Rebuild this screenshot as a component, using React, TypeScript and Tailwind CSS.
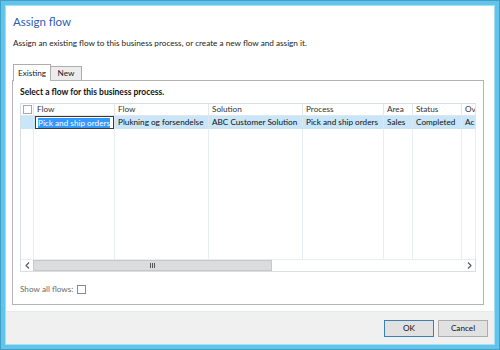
const cols = [
  { w: 13, label: '', cell: '' },
  { w: 81, label: 'Flow', cell: 'Pick and ship orders' },
  { w: 94, label: 'Flow', cell: 'Plukning og forsendelse' },
  { w: 94, label: 'Solution', cell: 'ABC Customer Solution' },
  { w: 81, label: 'Process', cell: 'Pick and ship orders' },
  { w: 29, label: 'Area', cell: 'Sales' },
  { w: 49, label: 'Status', cell: 'Completed' },
  { w: 14, label: 'Ov', cell: 'Ac' },
];

function Chevron({ dir }: { dir: 'left' | 'right' }) {
  return (
    <svg width="5" height="7" viewBox="0 0 5 7">
      <polyline
        points={dir === 'left' ? '4,0.5 1,3.5 4,6.5' : '1,0.5 4,3.5 1,6.5'}
        fill="none"
        stroke="#555"
        strokeWidth="1.1"
      />
    </svg>
  );
}

function Grid() {
  return (
    <div className="mt-[4px] flex h-[169px] w-[456px] flex-col border border-[#d5dfe7] bg-white">
      {/* header */}
      <div className="flex h-[12px] border-b border-[#e1e7ec]">
        {cols.map((c, i) => (
          <div
            key={i}
            style={{ width: c.w }}
            className="flex shrink-0 items-center overflow-hidden whitespace-nowrap border-r border-[#e1e7ec] pl-[3px] text-[#333]"
          >
            {i === 0 ? <div className="ml-[-1px] h-[9px] w-[9px] border border-[#a9a9a9] bg-white" /> : c.label}
          </div>
        ))}
      </div>
      {/* selected row */}
      <div className="flex h-[13px] bg-[#c9e6f8]">
        {cols.map((c, i) => (
          <div
            key={i}
            style={{ width: c.w }}
            className="flex shrink-0 items-center overflow-hidden whitespace-nowrap border-r border-[#dbe8f1] pl-[3px] text-[#111]"
          >
            {i === 1 ? (
              <div className="ml-[-2px] flex h-[13px] w-[79px] items-center border border-[#3a3a3a] bg-white pl-[2px]">
                <span className="bg-[#3399ff] leading-[10px] text-white">{c.cell}</span>
              </div>
            ) : (
              c.cell
            )}
          </div>
        ))}
      </div>
      {/* empty area */}
      <div className="flex flex-1">
        {cols.map((c, i) => (
          <div key={i} style={{ width: c.w }} className="shrink-0 border-r border-[#e6eef4]" />
        ))}
      </div>
      {/* horizontal scrollbar */}
      <div className="flex h-[12px] border-t border-[#e6eef4] bg-white">
        <div className="flex w-[12px] items-center justify-center">
          <Chevron dir="left" />
        </div>
        <div className="flex w-[239px] items-center justify-center border border-[#c8c8c8] bg-[#dcdcdc]">
          <div className="flex gap-[1px]">
            <div className="h-[5px] w-[1px] bg-[#555]" />
            <div className="h-[5px] w-[1px] bg-[#555]" />
            <div className="h-[5px] w-[1px] bg-[#555]" />
          </div>
        </div>
        <div className="flex-1" />
        <div className="flex w-[12px] items-center justify-center">
          <Chevron dir="right" />
        </div>
      </div>
    </div>
  );
}

export default function App() {
  return (
    <div className="h-[350px] w-[500px] border border-[#3f9fc7] bg-[#62c4e9] p-[4px] font-['Segoe_UI',Lato,sans-serif] text-[8.2px]">
      <div className="flex h-full flex-col border border-[#a5dff3] bg-white">
        <div className="flex flex-1 flex-col px-[6px]">
          <div className="mt-[6px] pl-[1px] text-[11.5px] leading-[20px] text-[#2b5cb8]">Assign flow</div>
          <div className="mt-[5px] pl-[1px] leading-[12px] text-[#222]">
            Assign an existing flow to this business process, or create a new flow and assign it.
          </div>
          {/* tabs */}
          <div className="mt-[15px] flex items-end pl-[1px]">
            <div className="relative z-10 mb-[-1px] flex h-[17px] w-[38px] items-center justify-center border border-b-0 border-[#adadad] bg-white text-[#222]">
              Existing
            </div>
            <div className="flex h-[14px] w-[31px] items-center justify-center border border-b-0 border-l-0 border-[#adadad] bg-[#ececec] text-[#222]">
              New
            </div>
          </div>
          <div className="flex h-[225px] w-[472px] flex-col border border-[#b4b4b4] px-[7px] pt-[4px]">
            <div className="text-[8.5px] font-bold leading-[14px] text-[#111]">Select a flow for this business process.</div>
            <Grid />
            <div className="mt-[10px] flex items-center gap-[4px] leading-[14px] text-[#6a6a6a]">
              Show all flows:
              <div className="h-[9px] w-[9px] border border-[#8a8a8a] bg-white" />
            </div>
          </div>
        </div>
        {/* footer */}
        <div className="flex h-[33px] items-center justify-end gap-[4px] border-t border-[#e3ebf1] bg-[#f0f0f0] pr-[6px]">
          <button className="h-[17px] w-[50px] border border-[#3c7fb1] bg-[#e1e1e1] text-[8.2px] text-[#111]">OK</button>
          <button className="h-[17px] w-[50px] border border-[#adadad] bg-[#e1e1e1] text-[8.2px] text-[#111]">Cancel</button>
        </div>
      </div>
    </div>
  );
}
